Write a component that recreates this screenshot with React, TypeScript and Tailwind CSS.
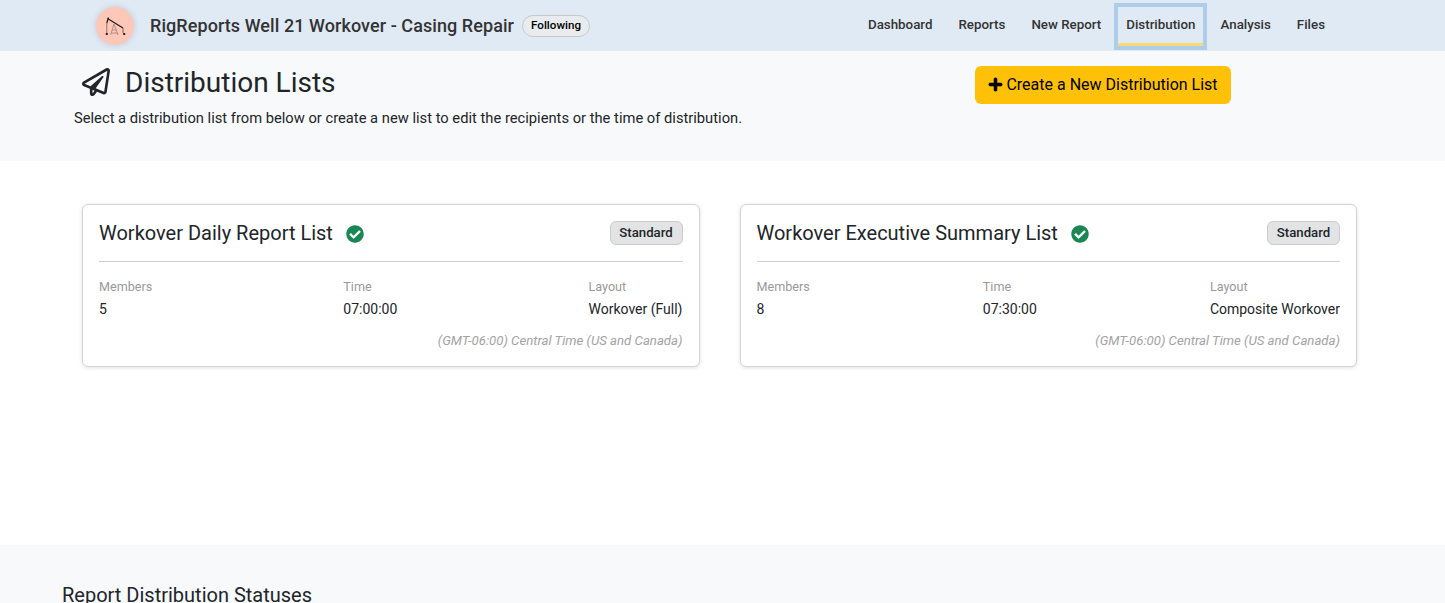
import { FaCheckCircle, FaPlus, FaRegPaperPlane } from "react-icons/fa";

const navItems = ["Dashboard", "Reports", "New Report", "Distribution", "Analysis", "Files"];

const lists = [
  {
    title: "Workover Daily Report List",
    members: 5,
    time: "07:00:00",
    layout: "Workover (Full)",
  },
  {
    title: "Workover Executive Summary List",
    members: 8,
    time: "07:30:00",
    layout: "Composite Workover",
  },
];

function PumpJack() {
  return (
    <svg viewBox="104 15 22 22" className="h-[22px] w-[22px]" fill="none">
      <path d="M107.5 18.5 L123 28" stroke="#222" strokeWidth="1.3" />
      <path d="M108.5 17.5 L106.8 23" stroke="#222" strokeWidth="1.3" />
      <path d="M106.8 23 V33" stroke="#222" strokeWidth="0.5" />
      <path d="M123 28 V33" stroke="#222" strokeWidth="0.6" />
      <path d="M114 24 L110.5 35 M114 24 L118 35 M112 30 H116.5 M111 33 H117.5" stroke="#a98a80" strokeWidth="0.9" />
      <rect x="105.8" y="33" width="2" height="2" fill="#222" />
      <rect x="123.2" y="33" width="2" height="2" fill="#222" />
    </svg>
  );
}

function ListCard({ list }: { list: (typeof lists)[number] }) {
  return (
    <div className="flex-1 rounded-[6px] border border-[#d4d4d4] bg-white px-4 pt-4 pb-[15px] shadow-[0_1px_4px_rgba(0,0,0,0.12)]">
      <div className="flex h-[41px] items-start justify-between border-b border-[#cfcfcf]">
        <div className="flex items-center">
          <h2 className="text-[20px] leading-[25px] text-[#212529]">{list.title}</h2>
          <FaCheckCircle className="ml-[13px] text-[18px] text-[#198754]" />
        </div>
        <span className="flex h-[24px] w-[73px] items-center justify-center rounded-[6px] border border-[#cccccc] bg-[#e2e3e5] text-[13.2px] font-medium text-[#212529]">
          Standard
        </span>
      </div>
      <div className="mt-[14px] flex justify-between text-[14px] leading-[21px]">
        <div>
          <div className="text-[12.6px] text-[#999999]">Members</div>
          <div className="mt-[2px] text-[#212529]">{list.members}</div>
        </div>
        <div>
          <div className="text-[12.6px] text-[#999999]">Time</div>
          <div className="mt-[2px] text-[#212529]">{list.time}</div>
        </div>
        <div>
          <div className="text-[12.6px] text-[#999999]">Layout</div>
          <div className="mt-[2px] text-[#212529]">{list.layout}</div>
        </div>
      </div>
      <p className="mt-[11px] text-right text-[13.2px] leading-[20px] italic text-[#a3a3a3]">
        (GMT-06:00) Central Time (US and Canada)
      </p>
    </div>
  );
}

export default function App() {
  return (
    <div className="h-[603px] overflow-hidden bg-white font-['Roboto',sans-serif]">
      <header className="flex h-[51px] items-center justify-between bg-[#e0eaf5] pr-[107px] pl-[96px]">
        <div className="flex items-center">
          <div className="flex h-[38px] w-[38px] items-center justify-center rounded-full bg-[#ffc7b8] shadow-[0_0_6px_rgba(0,0,0,0.15)]">
            <PumpJack />
          </div>
          <span className="ml-[16px] text-[18px] font-medium tracking-[0.07px] text-[#333333]">
            RigReports Well 21 Workover - Casing Repair
          </span>
          <span className="ml-[8px] flex h-[22px] w-[68px] items-center justify-center rounded-full border border-[#c8c8c8] bg-[#e9ecef] text-[11.6px] font-medium text-black">
            Following
          </span>
        </div>
        <nav className="flex items-center">
          {navItems.map((item) =>
            item === "Distribution" ? (
              <a
                key={item}
                className="mt-[2px] flex h-[47px] items-center border-4 border-[#aecde8] px-[8px] pb-[3px] text-[13.33px] font-medium text-[#333333] shadow-[inset_0_-3px_0_#fdd875]"
              >
                {item}
              </a>
            ) : (
              <a key={item} className="px-[13px] pb-[2px] text-[13.33px] font-medium text-[#333333]">
                {item}
              </a>
            ),
          )}
        </nav>
      </header>

      <section className="flex h-[110px] items-start justify-between bg-[#f8f9fa] pr-[214px] pl-[74px]">
        <div>
          <div className="flex h-[62px] items-center pl-[8px]">
            <FaRegPaperPlane className="text-[28px] text-[#212529]" />
            <h1 className="ml-[15px] pt-[1px] text-[28px] leading-[62px] text-[#212529]">
              Distribution Lists
            </h1>
          </div>
          <p className="text-[14.72px] leading-[10px] text-[#212529]">
            Select a distribution list from below or create a new list to edit the recipients or the time of distribution.
          </p>
        </div>
        <button className="mt-[15px] flex h-[38px] w-[256px] items-center justify-center rounded-[6px] bg-[#ffc107] text-[16px] text-black">
          <FaPlus className="mr-[3px] mb-[1px] stroke-[24px] text-[15px]" />
          Create a New Distribution List
        </button>
      </section>

      <main className="flex h-[384px] items-start gap-[40px] pt-[43px] pr-[88px] pl-[82px]">
        {lists.map((list) => (
          <ListCard key={list.title} list={list} />
        ))}
      </main>

      <section className="h-[58px] bg-[#f8f9fa] pt-[38px] pl-[62px]">
        <h3 className="text-[20px] leading-[24px] text-[#212529]">Report Distribution Statuses</h3>
      </section>
    </div>
  );
}
